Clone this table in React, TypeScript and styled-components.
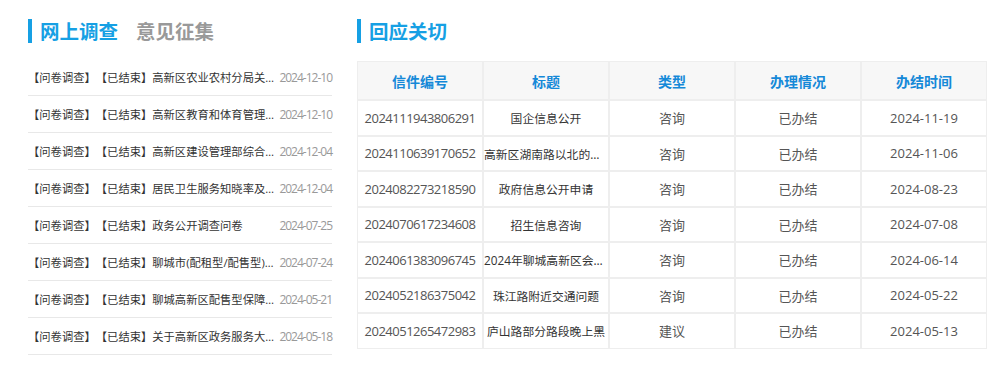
import React from 'react';
import styled, { createGlobalStyle } from 'styled-components';

const GlobalStyle = createGlobalStyle`
  html, body {
    margin: 0;
    padding: 0;
    background: #fff;
  }
  body {
    font-family: "Open Sans", "Noto Sans CJK SC", "Microsoft YaHei", sans-serif;
    text-spacing-trim: space-all;
  }
`;

const surveys = [
  { title: '【问卷调查】【已结束】高新区农业农村分局关于农村人居环境整治的调查', date: '2024-12-10' },
  { title: '【问卷调查】【已结束】高新区教育和体育管理部满意度调查', date: '2024-12-10' },
  { title: '【问卷调查】【已结束】高新区建设管理部综合满意度调查', date: '2024-12-04' },
  { title: '【问卷调查】【已结束】居民卫生服务知晓率及满意度调查', date: '2024-12-04' },
  { title: '【问卷调查】【已结束】政务公开调查问卷', date: '2024-07-25' },
  { title: '【问卷调查】【已结束】聊城市(配租型/配售型)保障性住房需求调查', date: '2024-07-24' },
  { title: '【问卷调查】【已结束】聊城高新区配售型保障性住房需求调查', date: '2024-05-21' },
  { title: '【问卷调查】【已结束】关于高新区政务服务大厅满意度调查', date: '2024-05-18' },
];

const letters = [
  { no: '2024111943806291', title: '国企信息公开', type: '咨询', state: '已办结', date: '2024-11-19' },
  { no: '2024110639170652', title: '高新区湖南路以北的道路问题', type: '咨询', state: '已办结', date: '2024-11-06' },
  { no: '2024082273218590', title: '政府信息公开申请', type: '咨询', state: '已办结', date: '2024-08-23' },
  { no: '2024070617234608', title: '招生信息咨询', type: '咨询', state: '已办结', date: '2024-07-08' },
  { no: '2024061383096745', title: '2024年聊城高新区会计资格考试', type: '咨询', state: '已办结', date: '2024-06-14' },
  { no: '2024052186375042', title: '珠江路附近交通问题', type: '咨询', state: '已办结', date: '2024-05-22' },
  { no: '2024051265472983', title: '庐山路部分路段晚上黑', type: '建议', state: '已办结', date: '2024-05-13' },
];

const Page = styled.div`
  display: flex;
  align-items: flex-start;
  gap: 25px;
  padding: 19px 0 0 28px;
  width: 1003px;
  box-sizing: border-box;
`;

const Panel = styled.section<{ $width: number }>`
  width: ${p => p.$width}px;
  flex-shrink: 0;
`;

const Heading = styled.div`
  display: flex;
  align-items: center;
  gap: 18px;
  height: 24px;
  padding-left: 8px;
  border-left: 4px solid #16a0e4;
`;

const HeadingTab = styled.h2<{ $active?: boolean }>`
  margin: 0;
  font-family: "Noto Sans CJK SC", sans-serif;
  font-size: 19.5px;
  font-weight: 700;
  line-height: 24px;
  color: ${p => (p.$active ? '#16a0e4' : '#999')};
`;

const List = styled.ul`
  list-style: none;
  margin: 16px 0 0;
  padding: 0;
`;

const Item = styled.li`
  display: flex;
  align-items: center;
  gap: 3px;
  height: 36px;
  border-bottom: 1px solid #e8e8e8;
`;

const ItemTitle = styled.a`
  flex: 1;
  min-width: 0;
  color: #333;
  font-size: 11.3px;
  text-decoration: none;
  white-space: nowrap;
  overflow: hidden;
  text-overflow: ellipsis;
`;

const ItemDate = styled.span`
  flex-shrink: 0;
  color: #999;
  font-size: 12px;
  letter-spacing: -1px;
`;

const Table = styled.table`
  margin-top: 18px;
  width: 630px;
  table-layout: fixed;
  border-collapse: separate;
  border-spacing: 0;
  font-size: 13px;
`;

const Th = styled.th`
  height: 37px;
  padding: 0;
  background: #f7f7f7;
  border: 1px solid #eee;
  color: #1589d8;
  font-family: "Noto Sans CJK SC", sans-serif;
  font-size: 14px;
  font-weight: 700;
  text-align: center;
`;

const Td = styled.td<{ $dark?: boolean }>`
  height: 33.5px;
  padding: 0;
  border: 1px solid #eee;
  color: ${p => (p.$dark ? '#333' : '#555')};
  font-size: ${p => (p.$dark ? '11.8px' : '13px')};
  text-align: center;
  white-space: nowrap;
  overflow: hidden;
  text-overflow: ellipsis;
`;

const Num = styled.span`
  letter-spacing: -0.5px;
`;

export default function App() {
  return (
    <>
      <GlobalStyle />
      <Page>
        <Panel $width={304}>
          <Heading>
            <HeadingTab $active>网上调查</HeadingTab>
            <HeadingTab>意见征集</HeadingTab>
          </Heading>
          <List>
            {surveys.map((s, i) => (
              <Item key={i}>
                <ItemTitle href="#">{s.title}</ItemTitle>
                <ItemDate>{s.date}</ItemDate>
              </Item>
            ))}
          </List>
        </Panel>
        <Panel $width={630}>
          <Heading>
            <HeadingTab $active>回应关切</HeadingTab>
          </Heading>
          <Table>
            <thead>
              <tr>
                <Th>信件编号</Th>
                <Th>标题</Th>
                <Th>类型</Th>
                <Th>办理情况</Th>
                <Th>办结时间</Th>
              </tr>
            </thead>
            <tbody>
              {letters.map(l => (
                <tr key={l.no}>
                  <Td><Num>{l.no}</Num></Td>
                  <Td $dark>{l.title}</Td>
                  <Td>{l.type}</Td>
                  <Td>{l.state}</Td>
                  <Td>{l.date}</Td>
                </tr>
              ))}
            </tbody>
          </Table>
        </Panel>
      </Page>
    </>
  );
}
